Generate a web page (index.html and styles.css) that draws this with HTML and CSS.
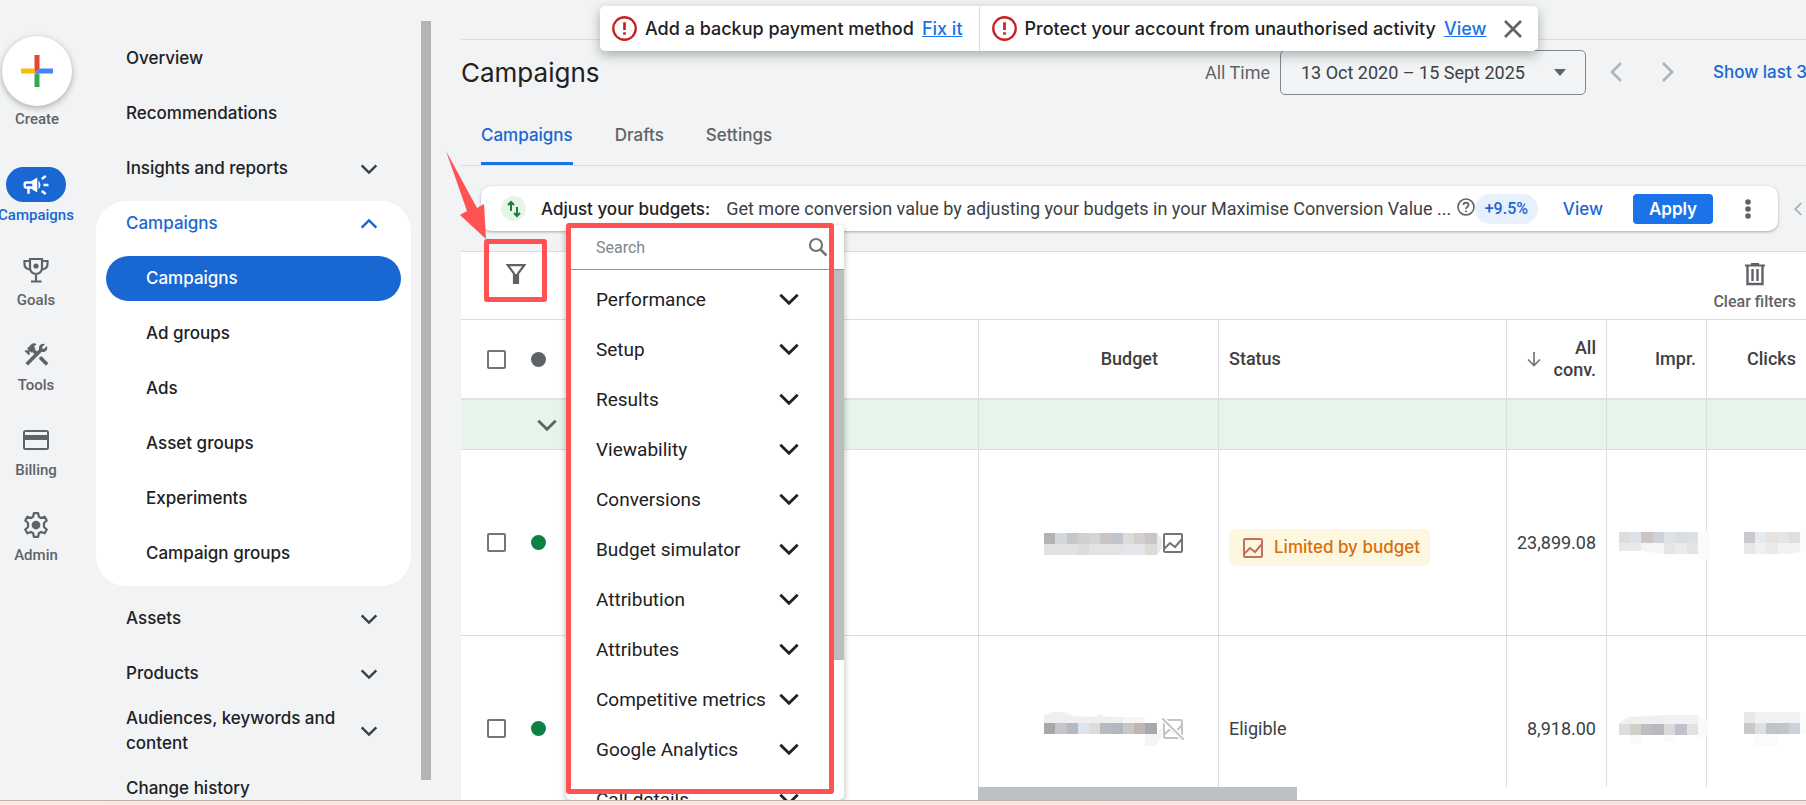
FILE: index.html
```html
<!DOCTYPE html>
<html lang="en">

<head>
  <meta charset="UTF-8">
  <meta name="viewport" content="width=device-width, initial-scale=1.0">
  <link rel="stylesheet" href="styles.css">
  <title>Campaigns</title>
</head>

<body>
  <!-- shared icons -->
  <svg class="sprite" aria-hidden="true">
    <symbol id="down" viewBox="0 0 24 24"><path d="M4 8l8 8 8-8" fill="none" stroke="currentColor" stroke-width="2.6" /></symbol>
    <symbol id="left" viewBox="0 0 24 24"><path d="M17 3l-9 9 9 9" fill="none" stroke="currentColor" stroke-width="2.6" /></symbol>
    <symbol id="alert" viewBox="0 0 24 24">
      <circle cx="12" cy="12" r="10.8" fill="none" stroke="currentColor" stroke-width="2.2" />
      <path d="M12 6v7.5M12 15.5V18" stroke="currentColor" stroke-width="2.6" />
    </symbol>
    <symbol id="chart" viewBox="0 0 22 22">
      <rect x="2" y="2" width="18" height="18" rx="1" fill="none" stroke="currentColor" stroke-width="2" />
      <path d="M2 17l6-6 5 4 7-8" fill="none" stroke="currentColor" stroke-width="2" />
    </symbol>
  </svg>

  <div class="app">
    <div class="rail">
      <button class="create">
        <span class="create-circle">
          <svg width="32" height="32" viewBox="0 0 32 32">
            <path d="M13.5 0h5v13.500l-5 5z" fill="#ea4335" />
            <path d="M0 13.500h13.500v5H0z" fill="#fbbc04" />
            <path d="M18.500 13.500H32v5H13.500z" fill="#4285f4" />
            <path d="M13.500 18.500h5V32h-5z" fill="#34a853" />
          </svg>
        </span>
        <span class="rail-label">Create</span>
      </button>
      <a class="rail-item active" href="#">
        <span class="rail-icon">
          <svg width="30" height="30" viewBox="0 0 24 24" fill="currentColor"><path d="M18 11v2h4v-2h-4zm-2 6.610c.96.71 2.210 1.650 3.200 2.390.4-.53.8-1.070 1.200-1.600-.99-.74-2.240-1.680-3.200-2.400-.4.54-.8 1.080-1.200 1.610zM20.400 5.600c-.4-.53-.8-1.070-1.200-1.600-.99.74-2.240 1.680-3.200 2.400.4.53.8 1.070 1.200 1.600.96-.72 2.210-1.650 3.200-2.400zM4 9c-1.100 0-2 .9-2 2v2c0 1.100.9 2 2 2h1v4h2v-4h1l5 3V6L8 9H4zm5 1.700v2.600l-.45-.3H4v-2h4.550zM15.500 12c0-1.330-.58-2.530-1.500-3.350v6.690c.92-.81 1.500-2.010 1.500-3.340z" /></svg>
        </span>
        <span class="rail-label">Campaigns</span>
      </a>
      <a class="rail-item" href="#">
        <span class="rail-icon">
          <svg width="26" height="26" viewBox="0 0 26 26" fill="none" stroke="currentColor" stroke-width="2.200">
            <path d="M7 2h12v9a6 6 0 0 1-12 0zM7 4H1.500v3c0 3.500 2 5 5.500 5.500M19 4h5.500v3c0 3.500-2 5-5.500 5.500M13 17v7M8 24.500h10.500" />
            <circle cx="13" cy="9" r="2.600" fill="currentColor" stroke="none" />
          </svg>
        </span>
        <span class="rail-label">Goals</span>
      </a>
      <a class="rail-item" href="#">
        <span class="rail-icon">
          <svg width="29" height="29" viewBox="0 0 24 24" fill="currentColor"><path d="M13.780 15.300l6 6 2.110-2.160-6-6zM17.500 10c1.930 0 3.500-1.570 3.500-3.500 0-.58-.16-1.120-.41-1.600l-2.700 2.700-1.490-1.490 2.700-2.700c-.48-.25-1.020-.41-1.600-.41C15.570 3 14 4.570 14 6.500c0 .41.08.8.21 1.160l-1.850 1.850-1.780-1.780.71-.71-1.410-1.410L12 3.490c-1.170-1.170-3.070-1.170-4.240 0L4.220 7.030l1.410 1.410H2.810l-.71.71 3.540 3.540.71-.71V9.150l1.410 1.410.71-.71 1.780 1.780-7.410 7.410 2.120 2.120L16.340 9.790c.37.13.76.21 1.160.21z" /></svg>
        </span>
        <span class="rail-label">Tools</span>
      </a>
      <a class="rail-item" href="#">
        <span class="rail-icon">
          <svg width="26" height="20" viewBox="0 0 26 20"><rect x="1" y="1" width="24" height="18" rx="1.500" fill="none" stroke="currentColor" stroke-width="2" /><path d="M1 5h24v5H1z" fill="currentColor" /></svg>
        </span>
        <span class="rail-label">Billing</span>
      </a>
      <a class="rail-item" href="#">
        <span class="rail-icon">
          <svg width="30" height="30" viewBox="0 0 24 24"><path d="M10.300 2.500h3.400l.6 2.900 1.700 1 2.900-1 1.700 3-2.200 2v3.200l2.200 2-1.700 3-2.900-1-1.700 1-.6 2.900h-3.400l-.6-2.900-1.700-1-2.900 1-1.700-3 2.200-2v-3.200l-2.200-2 1.700-3 2.900 1 1.700-1z" fill="none" stroke="currentColor" stroke-width="1.800" stroke-linejoin="round" /><circle cx="12" cy="12" r="3.500" fill="currentColor" /></svg>
        </span>
        <span class="rail-label">Admin</span>
      </a>
    </div>

    <nav class="side">
      <a class="side-item" href="#">Overview</a>
      <a class="side-item" href="#">Recommendations</a>
      <button class="side-item">Insights and reports <svg class="chev"><use href="#down" /></svg></button>
      <div class="side-card">
        <button class="side-item open">Campaigns <svg class="chev up"><use href="#down" /></svg></button>
        <a class="sub-item current" href="#">Campaigns</a>
        <a class="sub-item" href="#">Ad groups</a>
        <a class="sub-item" href="#">Ads</a>
        <a class="sub-item" href="#">Asset groups</a>
        <a class="sub-item" href="#">Experiments</a>
        <a class="sub-item" href="#">Campaign groups</a>
      </div>
      <button class="side-item">Assets <svg class="chev"><use href="#down" /></svg></button>
      <button class="side-item">Products <svg class="chev"><use href="#down" /></svg></button>
      <button class="side-item">Audiences, keywords and content <svg class="chev"><use href="#down" /></svg></button>
      <a class="side-item" href="#">Change history</a>
    </nav>
    <div class="side-scroll"></div>

    <main class="main">
      <header class="head">
        <h1>Campaigns</h1>
        <label class="range-label" for="range">All Time</label>
        <div class="range">
          <select id="range">
            <option>13 Oct 2020 – 15 Sept 2025</option>
          </select>
          <svg class="caret" width="12" height="7" viewBox="0 0 12 7"><path d="M0 0h12L6 7z" fill="currentColor" /></svg>
        </div>
        <button class="step" aria-label="Previous period"><svg><use href="#left" /></svg></button>
        <button class="step next" aria-label="Next period"><svg><use href="#left" /></svg></button>
        <a class="show-last" href="#">Show last 30 days</a>
      </header>

      <div class="tabs">
        <a class="tab active" href="#">Campaigns</a>
        <a class="tab" href="#">Drafts</a>
        <a class="tab" href="#">Settings</a>
      </div>

      <div class="rec-row">
        <section class="rec">
          <span class="rec-icon">
            <svg width="14" height="18" viewBox="0 0 14 18" fill="none" stroke="currentColor" stroke-width="2"><path d="M4 11V3M1 5l3-3 3 3M10 7v8M7 13l3 3 3-3" /></svg>
          </span>
          <strong>Adjust your budgets:</strong>
          <span class="rec-text">Get more conversion value by adjusting your budgets in your Maximise Conversion Value ...</span>
          <svg class="help" width="18" height="18" viewBox="0 0 18 18" fill="none" stroke="currentColor"><circle cx="9" cy="9" r="8" stroke-width="1.600" /><path d="M6.500 7c0-3.200 5-3.200 5 0 0 1.800-2.500 1.800-2.500 4M9 12.500v1.800" stroke-width="1.700" /></svg>
          <span class="uplift">+9.5%</span>
          <a class="rec-view" href="#">View</a>
          <button class="apply">Apply</button>
          <button class="more" aria-label="More options"><svg width="6" height="20" viewBox="0 0 6 20" fill="currentColor"><circle cx="3" cy="3" r="2.800" /><circle cx="3" cy="10" r="2.800" /><circle cx="3" cy="17" r="2.800" /></svg></button>
        </section>
        <button class="rec-prev" aria-label="Previous recommendation"><svg><use href="#left" /></svg></button>
      </div>

      <div class="panel">
        <div class="toolbar">
          <button class="filter" aria-label="Add filter">
            <svg width="20" height="20" viewBox="0 0 20 20"><path d="M1.800 1.200h16.400L12 9.500V19H8V9.500z" fill="none" stroke="currentColor" stroke-width="2.200" /><path d="M8 10h4v9H8z" fill="currentColor" /></svg>
          </button>
          <button class="clear">
            <svg width="20" height="23" viewBox="0 0 20 23" fill="none" stroke="currentColor"><path d="M0 2.500h20M6 1.200h8" stroke-width="2.200" /><path d="M2.500 3v18h15V3" stroke-width="2.400" /><path d="M7.500 6v12M12.500 6v12" stroke-width="2.400" /></svg>
            Clear filters
          </button>
        </div>

        <div class="grid">
          <table>
            <colgroup>
              <col class="c-name">
              <col class="c-budget">
              <col class="c-status">
              <col class="c-num">
              <col class="c-num">
              <col class="c-last">
            </colgroup>
            <thead>
              <tr>
                <th><div class="pick"><input type="checkbox" aria-label="Select all"><span class="dot"></span></div></th>
                <th class="budget">Budget</th>
                <th class="status">Status</th>
                <th><div class="sorted"><svg width="14" height="15" viewBox="0 0 14 15"><path d="M7 0v13M1 7.500l6 6 6-6" fill="none" stroke="#757575" stroke-width="1.700" /></svg><span>All conv.</span></div></th>
                <th>Impr.</th>
                <th>Clicks</th>
              </tr>
            </thead>
            <tbody>
              <tr class="group">
                <td><button class="toggle" aria-label="Toggle group"><svg><use href="#down" /></svg></button></td>
                <td></td>
                <td></td>
                <td></td>
                <td></td>
                <td></td>
              </tr>
              <tr>
                <td><div class="pick"><input type="checkbox" aria-label="Select campaign 1"><span class="dot on"></span></div></td>
                <td>
                  <div class="hidden-budget">
                    <svg width="118" height="24" viewBox="0 -2 118 24">
                      <path d="M113 0l5 6v9l-5 7z" fill="#e9e9e9" />
                      <path d="M0 0h11v11H0z" fill="#b3b3b5" /><path d="M11 0h12v11H11z" fill="#d3d7d9" /><path d="M23 0h11v11H23z" fill="#c5c7ce" /><path d="M34 0h11v11H34z" fill="#cecfce" /><path d="M45 0h11v11H45z" fill="#d5d5d6" /><path d="M56 0h12v11H56z" fill="#c8c5c7" /><path d="M68 0h11v11H68z" fill="#c0c4cd" /><path d="M79 0h11v11H79z" fill="#dcdcdc" /><path d="M90 0h11v11H90z" fill="#d5cdc9" /><path d="M101 0h12v11h-12z" fill="#c6c5c7" />
                      <path d="M0 11h34v11H0z" fill="#e2e2e3" /><path d="M34 11h11v11H34z" fill="#dcdcda" /><path d="M45 11h34v11H45z" fill="#e2e3e4" /><path d="M79 11h22v11H79z" fill="#e5e6ea" /><path d="M101 11h12v11h-12z" fill="#dedad8" />
                    </svg>
                    <svg class="chart"><use href="#chart" /></svg>
                  </div>
                </td>
                <td class="status"><a class="chip" href="#"><svg class="chart"><use href="#chart" /></svg>Limited by budget</a></td>
                <td>23,899.08</td>
                <td>
                  <svg class="hidden-impr" width="90" height="32" viewBox="0 -4 90 32">
                    <path d="M79 0h11v28H79z" fill="#fafbfb" />
                    <path d="M0 1h11v11H0z" fill="#dddddc" /><path d="M11 1h11v11H11z" fill="#dee3ea" /><path d="M22 1h12v11H22z" fill="#cac6c7" /><path d="M34 1h11v11H34z" fill="#cfd1d8" /><path d="M45 1h11v11H45z" fill="#dfe2e5" /><path d="M56 1h12v11H56z" fill="#d9dee5" /><path d="M68 1h11v11H68z" fill="#dde0e3" />
                    <path d="M0 12h22v8H0z" fill="#e9e9e9" /><path d="M22 12h23v11l-23-3z" fill="#f5f5f5" /><path d="M45 12h11v11H45z" fill="#e5e5e7" /><path d="M56 12h12v11H56z" fill="#eaebed" /><path d="M68 12h11v11H68z" fill="#e4e4e4" />
                  </svg>
                </td>
                <td>
                  <svg class="hidden-clicks" width="62" height="32" viewBox="0 -4 62 32">
                    <path d="M56-4h6v26h-6z" fill="#fafbfb" />
                    <path d="M0 1h11v11H0z" fill="#cac9cb" /><path d="M11 1h11v11H11z" fill="#e3ebf1" /><path d="M22 1h12v11H22z" fill="#e5e3e2" /><path d="M34 1h11v11H34z" fill="#e4e5e8" /><path d="M45 1h11v11H45z" fill="#dfdfe0" />
                    <path d="M0 12h11v11H0z" fill="#e6e7e8" /><path d="M11 12h11v11H11z" fill="#eef0f2" /><path d="M22 12h12v11H22z" fill="#e8e9ea" /><path d="M34 12h22v9l-12 2H34z" fill="#f2f2f3" />
                  </svg>
                </td>
              </tr>
              <tr>
                <td><div class="pick"><input type="checkbox" aria-label="Select campaign 2"><span class="dot on"></span></div></td>
                <td>
                  <div class="hidden-budget">
                    <svg width="118" height="34" viewBox="0 0 118 34">
                      <path d="M101 22h12l5-8v10l-6 10h-11z" fill="#f5f5f5" />
                      <path d="M0 3l8-3h12l9 4 22 1 4-3 7 3h17v6H0z" fill="#efefef" /><path d="M79 5h22v6H79z" fill="#f7f6f5" />
                      <path d="M0 11h11v11H0z" fill="#a8a8a9" /><path d="M11 11h12v11H11z" fill="#c5c6cb" /><path d="M23 11h11v11H23z" fill="#b5b9c3" /><path d="M34 11h11v11H34z" fill="#dce4ed" /><path d="M45 11h11v11H45z" fill="#dddcda" /><path d="M56 11h12v11H56z" fill="#babbc1" /><path d="M68 11h11v11H68z" fill="#b3b7c0" /><path d="M79 11h11v11H79z" fill="#c8c8cb" /><path d="M90 11h11v11H90z" fill="#c0b7b4" /><path d="M101 11h12v11h-12z" fill="#a8a8ac" />
                    </svg>
                    <svg class="chart off"><use href="#chart" /><path d="M0 0l22 22" stroke="#fff" stroke-width="5" /><path d="M0 0l22 22" stroke="currentColor" stroke-width="2" /></svg>
                  </div>
                </td>
                <td class="status">Eligible</td>
                <td>8,918.00</td>
                <td>
                  <svg class="hidden-impr" width="90" height="30" viewBox="0 0 90 30">
                    <path d="M79 1l10 6v14l-10 4zM11 21h11v9H11zM45 21h11v7H45z" fill="#f9fafa" />
                    <path d="M0 9l10-6 35-2v9H0z" fill="#efefef" /><path d="M45 1h34v9H45z" fill="#f1f1f3" />
                    <path d="M0 10h11v11H0z" fill="#dddddf" /><path d="M11 10h11v11H11z" fill="#d2cec9" /><path d="M22 10h12v11H22z" fill="#bdbdc0" /><path d="M34 10h11v11H34z" fill="#b7b9bd" /><path d="M45 10h11v11H45z" fill="#d9d9da" /><path d="M56 10h12v11H56z" fill="#bfc2ca" /><path d="M68 10h11v11H68z" fill="#e3e2e2" />
                  </svg>
                </td>
                <td>
                  <svg class="hidden-clicks" width="62" height="34" viewBox="0 0 62 34">
                    <path d="M56 0h6v22h-6zM11 22h23v12H11z" fill="#fafbfb" />
                    <path d="M0 0h11v11H0z" fill="#e8e8e9" /><path d="M11 0h45v11H11z" fill="#f1f2f4" />
                    <path d="M0 11h11v11H0z" fill="#c9c9cb" /><path d="M11 11h11v11H11z" fill="#dfdfdf" /><path d="M22 11h12v11H22z" fill="#bfc4ca" /><path d="M34 11h11v11H34z" fill="#c3c5cd" /><path d="M45 11h11v11H45z" fill="#cdd1d8" />
                  </svg>
                </td>
              </tr>
            </tbody>
          </table>
        </div>
        <div class="h-scroll"><div class="h-thumb"></div></div>

        <!-- filter menu -->
        <div class="menu">
          <div class="menu-search">
            <input type="text" placeholder="Search" aria-label="Search filters">
            <svg width="20" height="20" viewBox="0 0 20 20" fill="none" stroke="currentColor"><circle cx="8" cy="8" r="6" stroke-width="2.200" /><path d="M12.500 12.500l6 6" stroke-width="2.600" /></svg>
          </div>
          <div class="menu-body">
            <div class="menu-list">
              <button>Performance <svg><use href="#down" /></svg></button>
              <button>Setup <svg><use href="#down" /></svg></button>
              <button>Results <svg><use href="#down" /></svg></button>
              <button>Viewability <svg><use href="#down" /></svg></button>
              <button>Conversions <svg><use href="#down" /></svg></button>
              <button>Budget simulator <svg><use href="#down" /></svg></button>
              <button>Attribution <svg><use href="#down" /></svg></button>
              <button>Attributes <svg><use href="#down" /></svg></button>
              <button>Competitive metrics <svg><use href="#down" /></svg></button>
              <button>Google Analytics <svg><use href="#down" /></svg></button>
              <button>Call details <svg><use href="#down" /></svg></button>
            </div>
            <div class="menu-thumb"></div>
          </div>
          <div class="mark mark-menu"></div>
        </div>
        <div class="mark mark-filter"></div>
        <svg class="arrow" width="42" height="90" viewBox="0 0 42 90"><path d="M1 0l31 57 7-4 2 35-26-24 7-4z" fill="#ff5252" /></svg>
      </div>
    </main>
  </div>
  <div class="strip"></div>

  <div class="notice">
    <div class="notice-item">
      <svg class="alert"><use href="#alert" /></svg>
      <span>Add a backup payment method</span>
      <a href="#">Fix it</a>
    </div>
    <div class="notice-item">
      <svg class="alert"><use href="#alert" /></svg>
      <span>Protect your account from unauthorised activity</span>
      <a href="#">View</a>
      <button class="close" aria-label="Close"><svg width="18" height="18" viewBox="0 0 18 18"><path d="M1 1l16 16M17 1L1 17" stroke="currentColor" stroke-width="2.600" /></svg></button>
    </div>
  </div>
</body>

</html>
```
FILE: styles.css
```css
:root {
  --blue: #1967d2;
  --bright: #1a73e8;
  --grey: #5f6368;
  --line: #dadce0;
  --red: #ff5252;
  --sans: Inter, "Liberation Sans", sans-serif;
  --roboto: Roboto, "Liberation Sans", sans-serif;
}

* {
  box-sizing: border-box;
}

body {
  margin: 0;
  height: 100vh;
  display: flex;
  flex-direction: column;
  overflow: hidden;
  position: relative;
  background-color: #f1f3f4;
  color: #202124;
  font-family: var(--roboto);
  font-size: 17px;
}

button {
  border: 0;
  padding: 0;
  background: none;
  color: inherit;
  font: inherit;
  cursor: pointer;
}

a {
  color: inherit;
  text-decoration: none;
}

svg {
  flex-shrink: 0;
  display: block;
}

.sprite {
  position: absolute;
  width: 0;
  height: 0;
}

.app {
  flex: 1;
  min-height: 0;
  display: flex;
}

.strip {
  height: 5px;
  flex-shrink: 0;
  position: relative;
  border-top: 1px solid #bdb3b0;
  background: linear-gradient(90deg, #fae8df, #f7e3e2);
}

/* left rail */
.rail {
  width: 72px;
  padding-top: 36px;
  display: flex;
  flex-direction: column;
  flex-shrink: 0;
  gap: 27px;
  color: var(--grey);
}

.create {
  display: flex;
  flex-direction: column;
  align-items: center;
  gap: 3px;
  margin: 0 0 11px 2px;
}

.create-circle {
  width: 70px;
  height: 70px;
  border-radius: 50%;
  background-color: #fff;
  box-shadow: 0 2px 6px rgba(60, 64, 67, 0.4);
  display: flex;
  align-items: center;
  justify-content: center;
}

.rail-item {
  display: flex;
  flex-direction: column;
  align-items: center;
  gap: 3px;
}

.rail-icon {
  width: 60px;
  height: 35px;
  border-radius: 18px;
  display: flex;
  align-items: center;
  justify-content: center;
}

.rail-label {
  font-size: 15px;
  font-weight: 500;
  line-height: 20px;
}

.rail-item.active {
  color: var(--blue);
}

.active .rail-icon {
  background-color: var(--blue);
  color: #fff;
}

/* side navigation */
.side {
  width: 315px;
  margin-left: 24px;
  padding-top: 36px;
  display: flex;
  flex-direction: column;
  flex-shrink: 0;
  gap: 10px;
  font-family: var(--sans);
  font-weight: 500;
}

.side-item,
.sub-item {
  min-height: 45px;
  flex-shrink: 0;
  padding: 0 30px;
  display: flex;
  align-items: center;
  justify-content: space-between;
  line-height: 25px;
  text-align: left;
}

.chev {
  width: 24px;
  height: 24px;
  padding: 1px;
  color: #3c4043;
}

.chev.up {
  transform: rotate(180deg);
  color: var(--blue);
}

.side-card {
  padding-bottom: 10px;
  display: flex;
  flex-direction: column;
  gap: 10px;
  border-radius: 30px;
  background-color: #fff;
}

.side-item.open {
  color: var(--blue);
}

.sub-item {
  margin: 0 10px;
  padding: 0 40px;
  border-radius: 23px;
}

.sub-item.current {
  background-color: var(--blue);
  color: #fff;
}

.side-scroll {
  width: 10px;
  margin: 21px 30px 20px 10px;
  flex-shrink: 0;
  background-color: #b1b3b5;
}

/* main column */
.main {
  flex: 1;
  min-width: 0;
  padding-top: 39px;
  display: flex;
  flex-direction: column;
}

.head {
  height: 65px;
  flex-shrink: 0;
  border-top: 1px solid var(--line);
  display: flex;
  align-items: center;
  white-space: nowrap;
}

h1 {
  margin: 0 auto 0 0;
  font-family: var(--sans);
  font-size: 26px;
  font-weight: 400;
}

.range-label {
  margin-right: 10px;
  font-size: 18px;
  color: var(--grey);
}

.range {
  width: 306px;
  margin-right: 18px;
  display: grid;
  align-items: center;
}

.range select,
.caret {
  grid-area: 1 / 1;
}

.range select {
  height: 45px;
  padding: 0 20px;
  border: 1px solid #80868b;
  border-radius: 5px;
  appearance: none;
  background: none;
  color: #3c4043;
  font-family: var(--roboto);
  font-size: 18px;
}

.caret {
  justify-self: end;
  margin-right: 20px;
  color: var(--grey);
}

.step {
  width: 24px;
  height: 24px;
  margin-right: 28px;
  color: #b0b3b6;
}

.step svg {
  width: 24px;
  height: 24px;
}

.next {
  transform: rotate(180deg);
  margin-right: 33px;
}

.show-last {
  width: 93px;
  overflow: hidden;
  font-family: var(--sans);
  font-weight: 500;
  color: var(--blue);
}

.tabs {
  height: 62px;
  flex-shrink: 0;
  padding-left: 20px;
  display: flex;
  gap: 42px;
  border-bottom: 1px solid var(--line);
  font-family: var(--sans);
  font-size: 17px;
  font-weight: 500;
  line-height: 62px;
  color: var(--grey);
}

.tab.active {
  height: 61px;
  color: var(--blue);
  border-bottom: 3px solid var(--bright);
}

.rec-row {
  flex-shrink: 0;
  padding: 20px 0 20px 20px;
  display: flex;
  align-items: center;
  gap: 12px;
}

.rec {
  flex: 1;
  min-width: 0;
  height: 45px;
  padding: 0 20px;
  display: flex;
  align-items: center;
  border-radius: 10px;
  background-color: #fff;
  box-shadow: 0 1px 3px rgba(60, 64, 67, 0.4);
  white-space: nowrap;
}

.rec-icon {
  width: 25px;
  height: 25px;
  margin-right: 15px;
  flex-shrink: 0;
  border-radius: 50%;
  background-color: #e6f4ea;
  color: #188038;
  display: flex;
  align-items: center;
  justify-content: center;
}

.rec strong {
  margin-right: 16px;
  font-family: var(--sans);
  font-weight: 500;
}

.rec-text {
  flex: 1;
  min-width: 0;
  overflow: hidden;
  font-size: 18px;
  color: #3c4043;
}

.help {
  margin-bottom: 4px;
  color: var(--grey);
}

.uplift {
  width: 63px;
  border-radius: 15px;
  background-color: #e8f0fe;
  color: var(--blue);
  font-size: 16px;
  font-weight: 500;
  line-height: 30px;
  text-align: center;
}

.rec-view {
  margin: 0 30px 0 25px;
  font-family: var(--sans);
  font-weight: 500;
  color: var(--blue);
}

.apply {
  width: 80px;
  height: 30px;
  border-radius: 4px;
  background-color: var(--bright);
  color: #fff;
  font-family: var(--sans);
  font-weight: 600;
}

.more {
  margin: 0 7px 0 32px;
  color: var(--grey);
}

.rec-prev {
  color: #a5a8ab;
}

.rec-prev svg {
  width: 16px;
  height: 18px;
}

/* table panel */
.panel {
  flex: 1;
  min-height: 0;
  position: relative;
  display: flex;
  flex-direction: column;
  border-top: 1px solid var(--line);
  background-color: #fff;
}

.toolbar {
  height: 67px;
  flex-shrink: 0;
  padding: 0 10px 0 45px;
  display: flex;
  align-items: center;
  justify-content: space-between;
  color: var(--grey);
}

.filter {
  margin-bottom: 23px;
}

.clear {
  padding-top: 4px;
  display: flex;
  flex-direction: column;
  align-items: center;
  gap: 6px;
  font-size: 16px;
  font-weight: 500;
  line-height: 20px;
}

.grid {
  flex: 1;
  min-height: 0;
  overflow: hidden;
}

table {
  width: 100%;
  table-layout: fixed;
  border-collapse: separate;
  border-spacing: 0;
  border-top: 1px solid var(--line);
  color: #3c4043;
  font-size: 18px;
}

.c-name {
  width: 518px;
}

.c-budget {
  width: 240px;
}

.c-status {
  width: auto;
}

.c-num {
  width: 100px;
}

.c-last {
  width: 99px;
}

th,
td {
  height: 186px;
  padding: 0 10px;
  border-right: 1px solid var(--line);
  border-bottom: 1px solid var(--line);
  text-align: right;
  vertical-align: middle;
}

th:last-child,
td:last-child {
  border-right: 0;
}

th {
  height: 80px;
  border-bottom: 2px solid #e0e1e6;
  font-weight: 500;
  line-height: 22px;
}

th.budget {
  padding-right: 60px;
}

.status {
  text-align: left;
}

.group td {
  height: 50px;
  background-color: #e6f4ea;
}

.pick {
  padding-left: 16px;
  display: flex;
  align-items: center;
  gap: 25px;
}

.pick input {
  width: 19px;
  height: 19px;
  margin: 0;
  appearance: none;
  border: 2px solid #757575;
  border-radius: 2px;
}

.dot {
  width: 15px;
  height: 15px;
  border-radius: 50%;
  background-color: var(--grey);
}

.dot.on {
  background-color: #0d8043;
}

.toggle {
  display: block;
  margin-left: 63px;
  color: var(--grey);
}

.toggle svg {
  width: 26px;
  height: 26px;
}

.sorted {
  display: flex;
  align-items: center;
  justify-content: space-between;
  padding-left: 10px;
}

.sorted span {
  width: 44px;
}

.hidden-budget {
  display: flex;
  align-items: center;
  justify-content: flex-end;
  padding-right: 24px;
}

.chart {
  width: 22px;
  height: 22px;
  color: #757575;
}

.chart.off {
  color: #c4c4c4;
}

.chip {
  margin-top: 10px;
  padding: 0 10px 0 13px;
  display: inline-flex;
  align-items: center;
  gap: 10px;
  border-radius: 6px;
  background-color: #fef7e0;
  color: #d56e0c;
  font-family: var(--sans);
  font-size: 17px;
  font-weight: 500;
  line-height: 37px;
  white-space: nowrap;
}

.chip .chart {
  color: #c5705f;
}

.hidden-impr {
  margin-left: 2px;
}

.hidden-clicks {
  margin-left: 27px;
}

.h-scroll {
  height: 13px;
  flex-shrink: 0;
  padding-left: 517px;
}

.h-thumb {
  width: 319px;
  height: 100%;
  background-color: #bdc1c6;
}

/* filter menu */
.menu {
  position: absolute;
  top: -27px;
  bottom: 0;
  left: 105px;
  width: 278px;
  display: flex;
  flex-direction: column;
  border-radius: 5px;
  background-color: #fff;
  box-shadow: 0 2px 6px rgba(60, 64, 67, 0.4);
}

.menu-search {
  height: 45px;
  flex-shrink: 0;
  padding: 0 16px 0 30px;
  display: flex;
  align-items: center;
  border-bottom: 1px solid #669df6;
  color: #757575;
}

.menu-search input {
  flex: 1;
  min-width: 0;
  padding: 0;
  border: 0;
  outline: 0;
  background: none;
  font-family: var(--roboto);
  font-size: 16px;
}

.menu-search input::placeholder {
  color: #80868b;
}

.menu-body {
  flex: 1;
  min-height: 0;
  display: flex;
  overflow: hidden;
}

.menu-list {
  flex: 1;
  padding-top: 4px;
}

.menu-list button {
  width: 100%;
  height: 50px;
  padding: 0 32px 0 30px;
  display: flex;
  align-items: center;
  justify-content: space-between;
  font-size: 19px;
  white-space: nowrap;
}

.menu-list svg {
  width: 26px;
  height: 26px;
}

.menu-thumb {
  width: 10px;
  height: 390px;
  background-color: #bdbdbd;
}

.mark {
  position: absolute;
  border: 5px solid var(--red);
  border-radius: 3px;
  pointer-events: none;
}

.mark-menu {
  inset: -2px 10px 6px 0;
}

.mark-filter {
  top: -13px;
  left: 23px;
  width: 63px;
  height: 63px;
}

.arrow {
  position: absolute;
  top: -101px;
  left: -16px;
}

/* account notices */
.notice {
  position: absolute;
  top: 6px;
  left: 600px;
  height: 45px;
  display: flex;
  border-radius: 5px;
  background-color: #fff;
  box-shadow: 0 4px 12px rgba(60, 64, 67, 0.4);
  font-family: var(--sans);
  font-size: 18px;
  font-weight: 500;
  white-space: nowrap;
}

.notice-item {
  padding: 0 16px 0 12px;
  display: flex;
  align-items: center;
  gap: 8px;
}

.notice-item + .notice-item {
  border-left: 1px solid var(--line);
}

.notice-item a {
  color: var(--bright);
  text-decoration: underline;
}

.alert {
  width: 25px;
  height: 25px;
  color: #c5221f;
}

.close {
  margin-left: 10px;
  color: var(--grey);
}
```
